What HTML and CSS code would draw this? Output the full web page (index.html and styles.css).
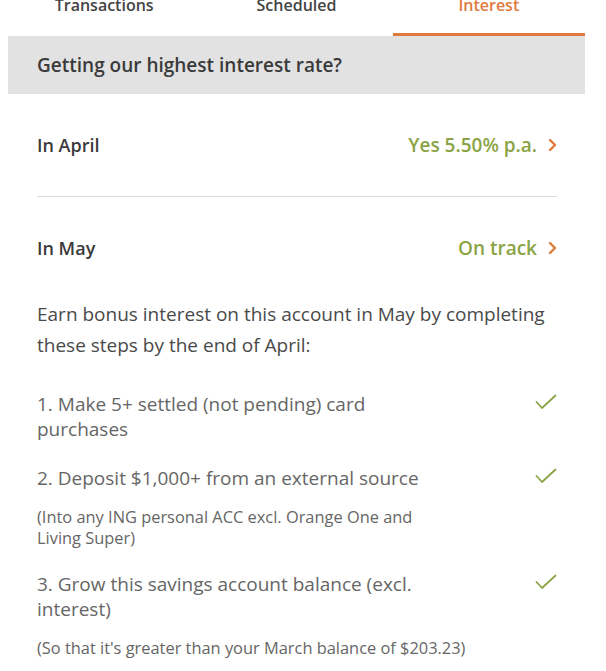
FILE: index.html
```html
<!DOCTYPE html>
<html lang="en">
<head>
    <meta charset="UTF-8">
    <meta name="viewport" content="width=device-width, initial-scale=1.0">
    <title>Interest</title>
    <link rel="stylesheet" href="styles.css">
</head>
<body>
    <div class="account">
        <!-- tabs -->
        <div class="tabs">
            <div class="tab">Transactions</div>
            <div class="tab">Scheduled</div>
            <div class="tab active">Interest</div>
        </div>

        <div class="banner">Getting our highest interest rate?</div>

        <div class="content">
            <div class="month">
                <span class="month-name">In April</span>
                <span class="status">Yes 5.50% p.a.
                    <svg class="chevron" width="9" height="14" viewBox="0 0 9 14"><path d="M2 2 L7 7 L2 12" fill="none" stroke="#e07a3c" stroke-width="2.4" stroke-linecap="round" stroke-linejoin="round"/></svg>
                </span>
            </div>
            <div class="month no-line">
                <span class="month-name">In May</span>
                <span class="status">On track
                    <svg class="chevron" width="9" height="14" viewBox="0 0 9 14"><path d="M2 2 L7 7 L2 12" fill="none" stroke="#e07a3c" stroke-width="2.4" stroke-linecap="round" stroke-linejoin="round"/></svg>
                </span>
            </div>

            <p class="intro">Earn bonus interest on this account in May by completing<br>these steps by the end of April:</p>

            <!-- steps -->
            <div class="step">
                <div class="step-text">
                    <div class="step-title">1. Make 5+ settled (not pending) card<br>purchases</div>
                </div>
                <svg class="tick" width="22" height="16" viewBox="0 0 22 16"><path d="M1.5 8 L7 14 L20.5 1.5" fill="none" stroke="#8aa445" stroke-width="1.8" stroke-linecap="round" stroke-linejoin="round"/></svg>
            </div>
            <div class="step">
                <div class="step-text">
                    <div class="step-title">2. Deposit $1,000+ from an external source</div>
                    <div class="step-note">(Into any ING personal ACC excl. Orange One and<br>Living Super)</div>
                </div>
                <svg class="tick" width="22" height="16" viewBox="0 0 22 16"><path d="M1.5 8 L7 14 L20.5 1.5" fill="none" stroke="#8aa445" stroke-width="1.8" stroke-linecap="round" stroke-linejoin="round"/></svg>
            </div>
            <div class="step">
                <div class="step-text">
                    <div class="step-title">3. Grow this savings account balance (excl.<br>interest)</div>
                    <div class="step-note">(So that it's greater than your March balance of $203.23)</div>
                </div>
                <svg class="tick" width="22" height="16" viewBox="0 0 22 16"><path d="M1.5 8 L7 14 L20.5 1.5" fill="none" stroke="#8aa445" stroke-width="1.8" stroke-linecap="round" stroke-linejoin="round"/></svg>
            </div>
        </div>
    </div>
</body>
</html>
```

FILE: styles.css
```css
body{
    margin: 0;
    background: #fff;
    font-family: "Open Sans", "Noto Sans", sans-serif;
    color: #333;
    overflow: hidden;
}
.account{
    margin: 0 21px 0 8px;
}
/* tab bar, top is cut off */
.tabs{
    display: grid;
    grid-template-columns: repeat(3, 1fr);
    margin-top: -7px;
}
.tab{
    text-align: center;
    font-size: 16px;
    font-weight: 600;
    color: #444;
    line-height: 24px;
    padding-bottom: 16px;
    border-bottom: 3px solid transparent;
}
.tab.active{
    color: #e07a3c;
    border-bottom-color: #e07a3c;
}
.banner{
    background: #e2e2e2;
    height: 58px;
    line-height: 58px;
    padding-left: 29px;
    font-size: 19px;
    font-weight: 600;
    color: #3a3a3a;
}
.content{
    padding: 0 28px 0 29px;
}
.month{
    display: flex;
    justify-content: space-between;
    align-items: center;
    height: 102px;
    border-bottom: 1px solid #dcdcdc;
}
.month.no-line{
    border-bottom: none;
}
.month-name{
    font-size: 18px;
    font-weight: 600;
    color: #3a3a3a;
}
.status{
    display: flex;
    align-items: center;
    gap: 11px;
    font-size: 19px;
    font-weight: 600;
    color: #8aa445;
}
.chevron{
    display: block;
}
.intro{
    margin: 0 0 31px;
    font-size: 19px;
    line-height: 31px;
    color: #4a4a4a;
}
.step{
    display: flex;
    justify-content: space-between;
    align-items: flex-start;
    margin-bottom: 24px;
}
.step-title{
    font-size: 19px;
    line-height: 25px;
    color: #666;
}
.step-note{
    margin-top: 15px;
    font-size: 16.4px;
    line-height: 21px;
    color: #666;
}
.tick{
    margin-top: 2px;
    flex-shrink: 0;
}
```
